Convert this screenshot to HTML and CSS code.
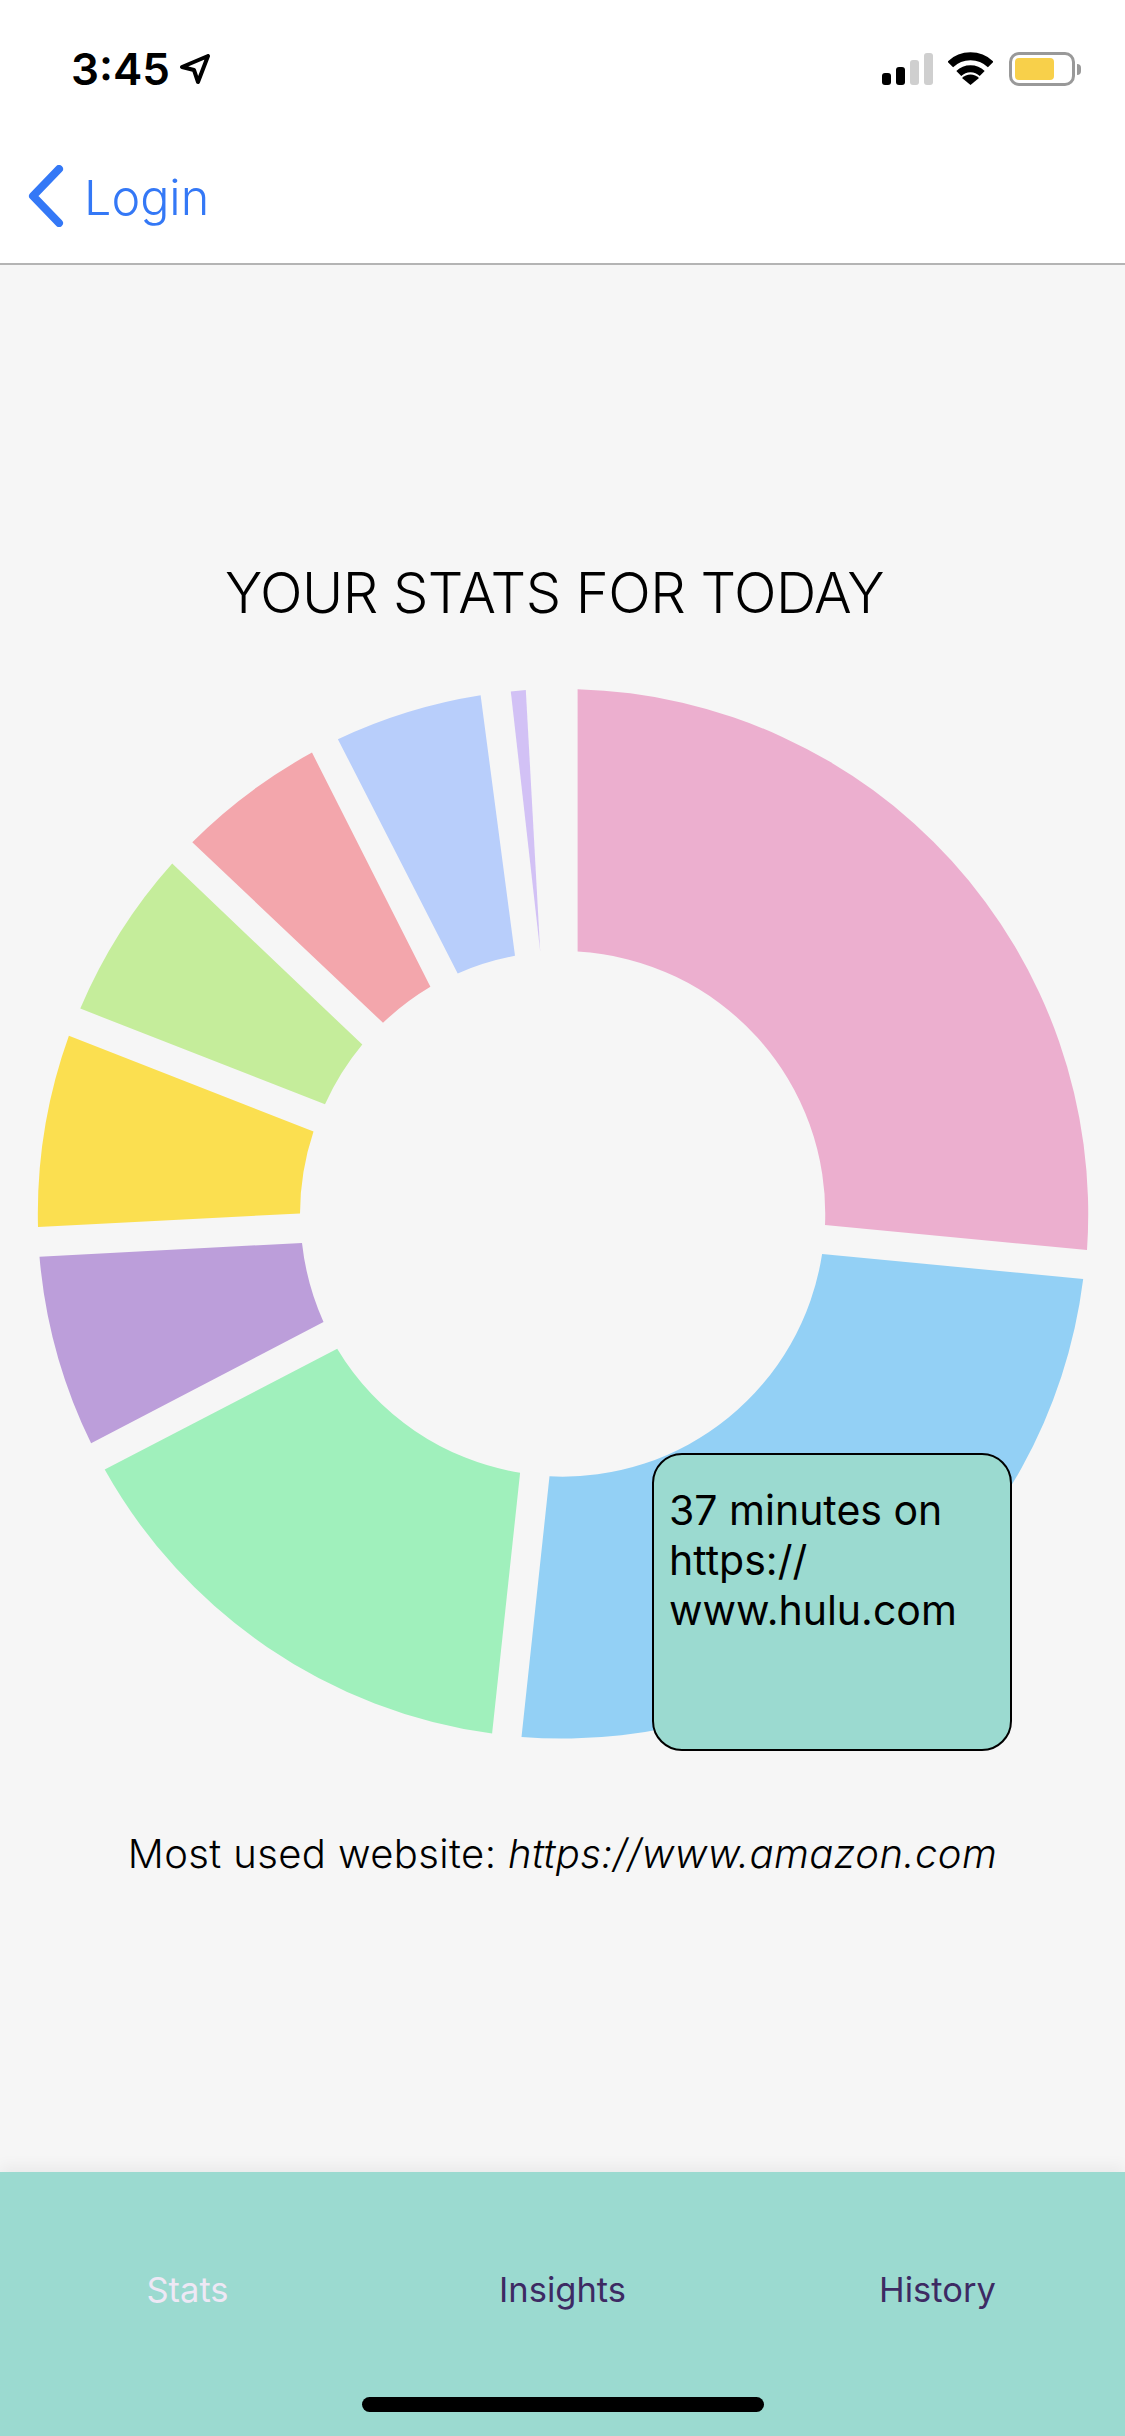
FILE: index.html
```html
<!DOCTYPE html>
<html lang="en">
<head>
  <meta charset="UTF-8" />
  <meta name="viewport" content="width=device-width, initial-scale=1.0"/>
  <title>Your stats</title>
  <link rel="stylesheet" href="styles.css">
</head>
<body>
  <div class="status-bar">
    <div class="status-left">
      <span class="time">3:45</span>
      <svg class="arrow" width="30" height="30" viewBox="0 0 30 30"><path d="M2 13 L28 2 L18 28 L14 16 Z" fill="none" stroke="#000" stroke-width="4" stroke-linejoin="round"/></svg>
    </div>
    <div class="status-right">
      <div class="signal">
        <span class="bar bar1"></span>
        <span class="bar bar2"></span>
        <span class="bar bar3 off"></span>
        <span class="bar bar4 off"></span>
      </div>
      <svg class="wifi" width="45" height="33" viewBox="0 0 45 33">
        <path d="M2.3 12.5 A29 29 0 0 1 42.7 12.5" fill="none" stroke="#000" stroke-width="8"/>
        <path d="M10.8 21.5 A16.5 16.5 0 0 1 34.2 21.5" fill="none" stroke="#000" stroke-width="7"/>
        <path d="M14 26 A12 12 0 0 1 31 26 L22.5 33 Z" fill="#000"/>
      </svg>
      <div class="battery">
        <div class="battery-body"><div class="battery-fill"></div></div>
        <div class="battery-nub"></div>
      </div>
    </div>
  </div>

  <div class="nav">
    <svg class="chevron" width="36" height="62" viewBox="0 0 36 62"><path d="M31 4 L5 31 L31 58" fill="none" stroke="#3478f6" stroke-width="8" stroke-linecap="round" stroke-linejoin="round"/></svg>
    <span class="nav-label">Login</span>
  </div>

  <div class="main">
    <h1 class="title">YOUR STATS FOR TODAY</h1>

    <div class="chart">
      <!-- viewBox uses screen coords, easier to measure the slices -->
      <svg class="donut" width="1125" height="1100" viewBox="0 660 1125 1100">
        <path fill="#ecafcf" d="M577.6 689.2 A525 525 0 0 1 1087 1250 L825 1225 A262.5 262.5 0 0 0 577.6 951.6 Z"/>
        <path fill="#93d0f5" d="M1083.2 1279 A525 525 0 0 1 521.5 1737 L549.5 1476.3 A262.5 262.5 0 0 0 822.1 1254 Z"/>
        <path fill="#a0f0bc" d="M492.1 1733.5 A525 525 0 0 1 104.7 1469.6 L337.2 1348.7 A262.5 262.5 0 0 0 520.1 1472.8 Z"/>
        <path fill="#bc9eda" d="M91.1 1443.3 A525 525 0 0 1 39.5 1256.7 L302 1242.9 A262.5 262.5 0 0 0 323.5 1321.9 Z"/>
        <path fill="#fbdf50" d="M38 1227 A525 525 0 0 1 68.9 1035.8 L313.5 1131.5 A262.5 262.5 0 0 0 300 1213.4 Z"/>
        <path fill="#c5ed9b" d="M80.3 1008.6 A525 525 0 0 1 172.2 863.6 L362.3 1044.6 A262.5 262.5 0 0 0 325 1104.3 Z"/>
        <path fill="#f3a6ac" d="M192.3 842.2 A525 525 0 0 1 312 752.6 L430.4 986.8 A262.5 262.5 0 0 0 383 1022.8 Z"/>
        <path fill="#b8cefb" d="M337.9 739.2 A525 525 0 0 1 480.6 695.2 L515 955.8 A262.5 262.5 0 0 0 457.7 973.4 Z"/>
        <path fill="#d2c1f5" d="M510.8 691.4 A525 525 0 0 1 525.8 689.9 L540.2 951.6 Z"/>
      </svg>
      <div class="tooltip">37 minutes on https:// www.hulu.com</div>
    </div>

    <p class="most-used">Most used website: <em>https://www.amazon.com</em></p>
  </div>

  <div class="tabs">
    <div class="tab-row">
      <div class="tab active">Stats</div>
      <div class="tab">Insights</div>
      <div class="tab">History</div>
    </div>
    <div class="home-bar"></div>
  </div>
</body>
</html>
```

FILE: styles.css
```css
body {
  font-family: Inter, "Liberation Sans", sans-serif;
  margin: 0;
  height: 2436px;
  overflow: hidden;
  display: flex;
  flex-direction: column;
  background-color: #f6f6f6;
  color: #000;
}

/* status bar */
.status-bar {
  height: 130px;
  box-sizing: border-box;
  padding: 52px 44px 0 71px;
  display: flex;
  justify-content: space-between;
  align-items: flex-start;
  background-color: #fff;
}
.status-left {
  display: flex;
  align-items: center;
  gap: 10px;
}
.time {
  font-size: 44px;
  line-height: 34px;
  font-weight: 600;
}
.status-right {
  display: flex;
  align-items: flex-start;
}
.signal {
  display: flex;
  align-items: flex-end;
  gap: 5px;
  height: 33px;
  margin-right: 15px;
}
.bar {
  width: 9px;
  border-radius: 3px;
  background-color: #000;
}
.bar.off {
  background-color: #cfcfcf;
}
.bar1 { height: 12px; }
.bar2 { height: 18px; }
.bar3 { height: 25px; }
.bar4 { height: 32px; }
.battery {
  display: flex;
  align-items: center;
  margin-left: 16px;
}
.battery-body {
  width: 66px;
  height: 34px;
  box-sizing: border-box;
  border: 3px solid #999;
  border-radius: 10px;
  padding: 3px;
}
.battery-fill {
  width: 39px;
  height: 22px;
  border-radius: 4px;
  background-color: #f8d04a;
}
.battery-nub {
  width: 4px;
  height: 11px;
  margin-left: 2px;
  border-radius: 0 4px 4px 0;
  background-color: #999;
}

/* nav */
.nav {
  height: 135px;
  box-sizing: border-box;
  padding-left: 28px;
  padding-bottom: 2px;
  display: flex;
  align-items: center;
  gap: 20px;
  background-color: #fff;
  border-bottom: 2px solid #b4b4b4;
}
.nav-label {
  font-size: 48.5px;
  font-weight: 300;
  color: #3478f6;
  padding-top: 3px;
}

/* main */
.main {
  flex: 1;
  padding-top: 293px;
}
.title {
  margin: 0 0 32px;
  height: 70px;
  line-height: 70px;
  font-size: 56px;
  font-weight: 300;
  letter-spacing: -0.5px;
  text-align: center;
  padding-right: 16px;
}
.chart {
  position: relative;
  height: 1100px;
}
.donut {
  display: block;
}
.tooltip {
  position: absolute;
  left: 652px;
  top: 793px;
  width: 360px;
  height: 298px;
  box-sizing: border-box;
  padding: 30px 15px 0;
  background-color: #9bdad0;
  border: 2px solid #000;
  border-radius: 30px;
  font-size: 41px;
  line-height: 50px;
}
.most-used {
  margin: 69px 0 0;
  font-size: 40px;
  line-height: 50px;
  font-weight: 300;
  letter-spacing: 0.4px;
  text-align: center;
}

/* bottom tabs */
.tabs {
  height: 264px;
  background-color: #9bdad0;
  box-shadow: 0 -6px 14px rgba(0, 0, 0, 0.05);
  position: relative;
}
.tab-row {
  display: flex;
  padding-top: 95px;
}
.tab {
  flex: 1;
  height: 46px;
  line-height: 46px;
  text-align: center;
  font-size: 34.5px;
  color: #3d2a63;
}
.tab.active {
  color: #eee8f5;
}
.home-bar {
  width: 402px;
  height: 15px;
  margin: 84px auto 0;
  border-radius: 8px;
  background-color: #000;
}
```
